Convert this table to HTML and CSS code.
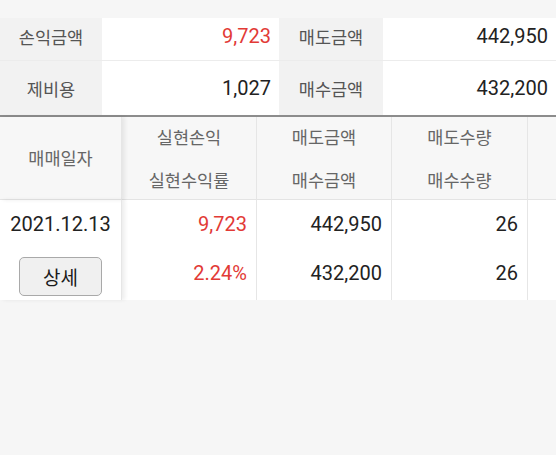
FILE: index.html
```html
<!DOCTYPE html>
<html lang="ko">
<head>
<meta charset="utf-8">
<link rel="stylesheet" href="styles.css">
</head>
<body>
<div class="summary">
  <div class="lbl r1">손익금액</div>
  <div class="val r1 red">9,723</div>
  <div class="lbl r1">매도금액</div>
  <div class="val r1">442,950</div>
  <div class="lbl r2">제비용</div>
  <div class="val r2">1,027</div>
  <div class="lbl r2">매수금액</div>
  <div class="val r2">432,200</div>
</div>
<div class="grid">
  <div class="head c1"><span>매매일자</span></div>
  <div class="head"><span>실현손익</span><span>실현수익률</span></div>
  <div class="head"><span>매도금액</span><span>매수금액</span></div>
  <div class="head"><span>매도수량</span><span>매수수량</span></div>
  <div class="head last"></div>
  <div class="cell c1 center"><span>2021.12.13</span><span><button class="btn">상세</button></span></div>
  <div class="cell"><span class="red">9,723</span><span class="red">2.24%</span></div>
  <div class="cell"><span>442,950</span><span>432,200</span></div>
  <div class="cell"><span>26</span><span>26</span></div>
  <div class="cell last"></div>
</div>
</body>
</html>
```
FILE: styles.css
```css
html, body {
  margin: 0;
  padding: 0;
}
body {
  width: 556px;
  height: 455px;
  background: #f6f6f6;
  font-family: Roboto, "Noto Sans CJK KR", sans-serif;
  overflow: hidden;
}
.summary {
  margin-top: 18px;
  display: grid;
  grid-template-columns: 102px 177px 104px 173px;
  grid-template-rows: 43px 54px;
  border-bottom: 2px solid #8c8c8c;
}
.summary > div {
  display: flex;
  align-items: center;
}
.summary .r1 {
  padding-bottom: 6px;
  border-bottom: 1px solid #ececec;
}
.lbl {
  background: #f2f2f2;
  justify-content: center;
  color: #555;
  font-family: "Noto Sans CJK KR", sans-serif;
  font-size: 17.5px;
}
.val {
  background: #fff;
  justify-content: flex-end;
  padding-right: 8px;
  color: #222;
  font-size: 20px;
}
.red { color: #e23a36; }
.grid {
  display: grid;
  grid-template-columns: 122px 135px 135px 136px 1fr;
  grid-template-rows: 83px 100px;
  background: #fff;
}
.grid > div {
  display: flex;
  flex-direction: column;
  border-right: 1px solid #e6e6e6;
}
.grid > div.last { border-right: none; }
.head {
  background: #f7f7f7;
  color: #666;
  font-family: "Noto Sans CJK KR", sans-serif;
  font-size: 17.5px;
  align-items: center;
  justify-content: center;
  gap: 17px;
  border-bottom: 1px solid #e4e4e4;
}
.head span { line-height: 26px; }
.c1 {
  box-shadow: 3px 0 4px rgba(0,0,0,0.07);
  position: relative;
  z-index: 1;
}
.cell {
  align-items: flex-end;
  padding-right: 9px;
  color: #222;
  font-size: 20px;
}
.cell > span {
  height: 50px;
  display: flex;
  align-items: center;
}
.cell > span:first-child { height: 48px; }
.cell.center {
  align-items: center;
  padding-right: 0;
}
.btn {
  width: 83px;
  height: 39px;
  margin-top: 6px;
  background: #f0f0f0;
  border: 1px solid #a9a9a9;
  border-radius: 5px;
  font-family: "Noto Sans CJK KR", sans-serif;
  font-size: 19px;
  color: #1a1a1a;
  padding: 0;
}
```
